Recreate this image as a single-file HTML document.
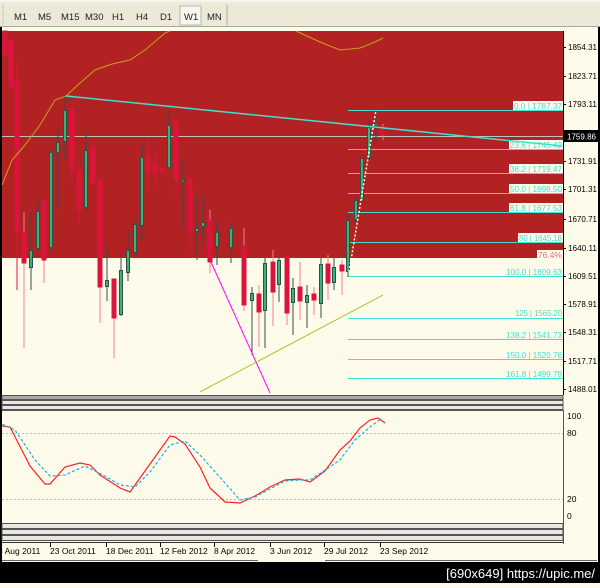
<!DOCTYPE html>
<html><head><style>
body{margin:0;width:600px;height:583px;overflow:hidden;background:#fffbeb;font-family:"Liberation Sans",Tahoma,sans-serif}
</style></head><body>
<svg width="600" height="583" xmlns="http://www.w3.org/2000/svg" font-family="Liberation Sans, sans-serif">
<rect width="600" height="583" fill="#fffbeb"/>
<rect x="0" y="0" width="600" height="27" fill="#ece9d8"/>
<line x1="0" y1="1" x2="600" y2="1" fill="none" stroke="#fff" />
<line x1="0" y1="26.5" x2="600" y2="26.5" stroke="#aca899"/>
<line x1="3" y1="5" x2="3" y2="24" stroke="#aca899" stroke-dasharray="1,1"/>
<rect x="180" y="6" width="21" height="19" fill="#f7f6f0" stroke="#b9b6a6"/>
<line x1="227" y1="5" x2="227" y2="25" stroke="#aca899"/>
<g font-size="9.5" fill="#222">
<text x="14" y="20">M1</text><text x="38" y="20">M5</text><text x="61" y="20">M15</text><text x="85" y="20">M30</text>
<text x="112" y="20">H1</text><text x="136" y="20">H4</text><text x="160" y="20">D1</text><text x="184" y="20">W1</text><text x="207" y="20">MN</text>
</g>
<rect x="0" y="27" width="2" height="535" fill="#000"/>
<rect x="598" y="27" width="2" height="535" fill="#000"/>
<rect x="2" y="31" width="561" height="227" fill="#b22222"/>
<line x1="563.5" y1="31" x2="563.5" y2="395" stroke="#000"/>
<line x1="2" y1="136.5" x2="563" y2="136.5" stroke="#c0c0c0"/>
<g stroke="#40e0d0" stroke-width="1">
<line x1="348" y1="110.5" x2="563" y2="110.5"/><line x1="348" y1="149.5" x2="563" y2="149.5"/>
<line x1="348" y1="173.5" x2="563" y2="173.5"/><line x1="348" y1="193.5" x2="563" y2="193.5"/>
<line x1="348" y1="212.5" x2="563" y2="212.5"/><line x1="348" y1="242.5" x2="563" y2="242.5"/>
<line x1="348" y1="276.5" x2="563" y2="276.5"/><line x1="348" y1="318.5" x2="563" y2="318.5"/>
<line x1="348" y1="339.5" x2="563" y2="339.5"/><line x1="348" y1="359.5" x2="563" y2="359.5"/>
<line x1="348" y1="378.5" x2="563" y2="378.5"/>
</g>
<g font-size="8.5" fill="#40e0d0" text-anchor="end">
<rect x="513" y="101" width="50" height="9" fill="#fffbeb"/><text x="562" y="109" textLength="48" lengthAdjust="spacingAndGlyphs">0.0 | 1787.37</text>
<rect x="509" y="140" width="54" height="9" fill="#fffbeb"/><text x="562" y="148" textLength="52" lengthAdjust="spacingAndGlyphs">23.6 | 1745.42</text>
<rect x="509" y="164" width="54" height="9" fill="#fffbeb"/><text x="562" y="172" textLength="52" lengthAdjust="spacingAndGlyphs">38.2 | 1719.47</text>
<rect x="509" y="184" width="54" height="9" fill="#fffbeb"/><text x="562" y="192" textLength="52" lengthAdjust="spacingAndGlyphs">50.0 | 1698.50</text>
<rect x="509" y="203" width="54" height="9" fill="#fffbeb"/><text x="562" y="211" textLength="52" lengthAdjust="spacingAndGlyphs">61.8 | 1677.53</text>
<rect x="518" y="233" width="45" height="9" fill="#fffbeb"/><text x="562" y="241" textLength="43" lengthAdjust="spacingAndGlyphs">80 | 1645.18</text>
<rect x="537" y="250" width="26" height="9" fill="#fffbeb"/><text x="562" y="258" fill="#e07080">76.4%</text>
<text x="562" y="275" textLength="56" lengthAdjust="spacingAndGlyphs">100.0 | 1609.63</text>
<text x="562" y="316" textLength="47" lengthAdjust="spacingAndGlyphs">125 | 1565.20</text>
<text x="562" y="338" textLength="56" lengthAdjust="spacingAndGlyphs">138.2 | 1541.73</text>
<text x="562" y="358" textLength="56" lengthAdjust="spacingAndGlyphs">150.0 | 1520.76</text>
<text x="562" y="377" textLength="56" lengthAdjust="spacingAndGlyphs">161.8 | 1499.79</text>
</g>
<g stroke-width="1">
<g fill="#dc143c" stroke="#dc143c">
<rect x="3" y="31" width="4" height="24"/>
<rect x="9" y="40" width="4" height="48"/>
<line x1="17" y1="60" x2="17" y2="290" /><rect x="15" y="82" width="4" height="151"/>
<line x1="24" y1="212" x2="24" y2="348" stroke="#f08090"/><rect x="22" y="232" width="4" height="31"/>
<line x1="44" y1="200" x2="44" y2="283" stroke="#f08090"/><rect x="42" y="200" width="4" height="60"/>
<line x1="72" y1="105" x2="72" y2="183"/><rect x="70" y="110" width="4" height="60"/>
<line x1="79" y1="165" x2="79" y2="223"/><rect x="77" y="170" width="4" height="40"/>
<line x1="93" y1="140" x2="93" y2="183"/><rect x="91" y="148" width="4" height="35"/>
<line x1="100" y1="180" x2="100" y2="323" stroke="#f08090"/><rect x="98" y="180" width="4" height="107"/>
<line x1="114" y1="279" x2="114" y2="358" stroke="#f08090"/><rect x="112" y="279" width="4" height="39"/>
<line x1="148" y1="138" x2="148" y2="190"/><rect x="146" y="158" width="4" height="12"/>
<line x1="155" y1="150" x2="155" y2="190"/><rect x="153" y="165" width="4" height="8"/>
<rect x="160" y="168" width="4" height="4"/>
<line x1="176" y1="122" x2="176" y2="200"/><rect x="174" y="122" width="4" height="58"/>
<line x1="190" y1="178" x2="190" y2="250"/><rect x="188" y="178" width="4" height="52"/>
<line x1="210" y1="210" x2="210" y2="273" stroke="#f08090"/><rect x="208" y="220" width="4" height="42"/>
<line x1="244" y1="228" x2="244" y2="311" stroke="#f08090"/><rect x="242" y="246" width="4" height="59"/>
<line x1="259" y1="285" x2="259" y2="347" stroke="#f08090"/><rect x="257" y="294" width="4" height="18"/>
<line x1="273" y1="250" x2="273" y2="326" stroke="#f08090"/><rect x="271" y="262" width="4" height="30"/>
<line x1="287" y1="257" x2="287" y2="325" stroke="#f08090"/><rect x="285" y="257" width="4" height="56"/>
<line x1="300" y1="262" x2="300" y2="320" stroke="#f08090"/><rect x="298" y="287" width="4" height="14"/>
<line x1="314" y1="287" x2="314" y2="315" stroke="#f08090"/><rect x="312" y="294" width="4" height="6"/>
<line x1="328" y1="255" x2="328" y2="300" stroke="#f08090"/><rect x="326" y="264" width="4" height="19"/>
<line x1="342" y1="260" x2="342" y2="295" stroke="#f08090"/><rect x="340" y="265" width="4" height="6"/>
<line x1="383" y1="124" x2="383" y2="140" stroke="#f08090"/><rect x="381" y="127" width="3" height="8"/>
</g>
<g fill="#3cb371" stroke="#2f4f4f">
<line x1="31" y1="212" x2="31" y2="290"/><rect x="29.5" y="250.5" width="3" height="17"/>
<line x1="38" y1="200" x2="38" y2="250"/><rect x="36.5" y="211.5" width="3" height="37"/>
<line x1="51" y1="150" x2="51" y2="253"/><rect x="49.5" y="152.5" width="3" height="95"/>
<line x1="58" y1="128" x2="58" y2="210"/><rect x="56.5" y="142.5" width="3" height="10"/>
<line x1="65" y1="96" x2="65" y2="160"/><rect x="63.5" y="110.5" width="3" height="31"/>
<line x1="86" y1="132" x2="86" y2="210"/><rect x="84.5" y="150.5" width="3" height="57"/>
<line x1="107" y1="247" x2="107" y2="301"/><rect x="105.5" y="280.5" width="3" height="6"/>
<line x1="121" y1="258" x2="121" y2="316"/><rect x="119.5" y="270.5" width="3" height="44"/>
<line x1="128" y1="230" x2="128" y2="281"/><rect x="126.5" y="250.5" width="3" height="22"/>
<line x1="135" y1="220" x2="135" y2="255"/><rect x="133.5" y="224.5" width="3" height="28"/>
<line x1="142" y1="145" x2="142" y2="240"/><rect x="140.5" y="157.5" width="3" height="68"/>
<line x1="169" y1="110" x2="169" y2="170"/><rect x="167.5" y="125.5" width="3" height="42"/>
<line x1="183" y1="160" x2="183" y2="228"/><rect x="181.5" y="180" width="3" height="2"/>
<line x1="197" y1="195" x2="197" y2="260"/><rect x="195.5" y="228.5" width="3" height="3"/>
<line x1="203" y1="195" x2="203" y2="245"/><rect x="201.5" y="222.5" width="3" height="4"/>
<line x1="217" y1="220" x2="217" y2="265"/><rect x="215.5" y="232.5" width="3" height="14"/>
<line x1="231" y1="222" x2="231" y2="263"/><rect x="229.5" y="228.5" width="3" height="19"/>
<line x1="252" y1="287" x2="252" y2="355"/><rect x="250.5" y="293.5" width="3" height="7"/>
<line x1="265" y1="258" x2="265" y2="348"/><rect x="263.5" y="263.5" width="3" height="47"/>
<line x1="279" y1="258" x2="279" y2="302"/><rect x="277.5" y="260.5" width="3" height="24"/>
<line x1="293" y1="278" x2="293" y2="335"/><rect x="291.5" y="288.5" width="3" height="14"/>
<line x1="307" y1="285" x2="307" y2="328"/><rect x="305.5" y="295.5" width="3" height="7"/>
<line x1="321" y1="258" x2="321" y2="318"/><rect x="319.5" y="264.5" width="3" height="39"/>
<line x1="334" y1="258" x2="334" y2="290"/><rect x="332.5" y="267.5" width="3" height="15"/>
<line x1="348" y1="215" x2="348" y2="277"/><rect x="346.5" y="220.5" width="3" height="51"/>
<line x1="356" y1="195" x2="356" y2="222"/><rect x="354.5" y="200.5" width="3" height="19"/>
<line x1="362" y1="158" x2="362" y2="202"/><rect x="360.5" y="158.5" width="3" height="42"/>
<line x1="369" y1="120" x2="369" y2="160"/><rect x="367.5" y="127.5" width="3" height="30"/>
<line x1="376" y1="110" x2="376" y2="143"/><rect x="374.5" y="123.5" width="3" height="2"/>
</g>
</g>
<polyline points="2,185 12,160 25,145 40,125 55,100 66,96 80,83 95,70 112,64 130,60 145,50 165,33 170,31" fill="none" stroke="#c8a020" stroke-width="1"/>
<polyline points="296,31 320,42 340,50 360,48 375,42 383,38" fill="none" stroke="#c8a020" stroke-width="1"/>
<line x1="66" y1="96" x2="563" y2="146" stroke="#40e0d0" stroke-width="1.5"/>
<line x1="349" y1="272" x2="376" y2="110" stroke="#fff" stroke-width="1.5" stroke-dasharray="2,2"/>
<line x1="211" y1="262" x2="270" y2="393" stroke="#ff00ff"/>
<line x1="200" y1="392" x2="383" y2="295" stroke="#9acd32"/>
<g font-size="8.5" fill="#000">
<g stroke="#000"><line x1="564" y1="47.5" x2="566" y2="47.5"/><line x1="564" y1="76.5" x2="566" y2="76.5"/><line x1="564" y1="104.5" x2="566" y2="104.5"/><line x1="564" y1="161.5" x2="566" y2="161.5"/><line x1="564" y1="189.5" x2="566" y2="189.5"/><line x1="564" y1="219.5" x2="566" y2="219.5"/><line x1="564" y1="248.5" x2="566" y2="248.5"/><line x1="564" y1="276.5" x2="566" y2="276.5"/><line x1="564" y1="304.5" x2="566" y2="304.5"/><line x1="564" y1="332.5" x2="566" y2="332.5"/><line x1="564" y1="361.5" x2="566" y2="361.5"/><line x1="564" y1="389.5" x2="566" y2="389.5"/></g>
<text x="568" y="50" textLength="29" lengthAdjust="spacingAndGlyphs">1854.31</text><text x="568" y="79" textLength="29" lengthAdjust="spacingAndGlyphs">1823.71</text><text x="568" y="107" textLength="29" lengthAdjust="spacingAndGlyphs">1793.11</text>
<text x="568" y="164" textLength="29" lengthAdjust="spacingAndGlyphs">1731.91</text><text x="568" y="192" textLength="29" lengthAdjust="spacingAndGlyphs">1701.31</text><text x="568" y="222" textLength="29" lengthAdjust="spacingAndGlyphs">1670.71</text>
<text x="568" y="251" textLength="29" lengthAdjust="spacingAndGlyphs">1640.11</text><text x="568" y="279" textLength="29" lengthAdjust="spacingAndGlyphs">1609.51</text><text x="568" y="307" textLength="29" lengthAdjust="spacingAndGlyphs">1578.91</text>
<text x="568" y="335" textLength="29" lengthAdjust="spacingAndGlyphs">1548.31</text><text x="568" y="364" textLength="29" lengthAdjust="spacingAndGlyphs">1517.71</text><text x="568" y="392" textLength="29" lengthAdjust="spacingAndGlyphs">1488.01</text>
</g>
<rect x="564" y="130" width="34" height="12" fill="#000"/>
<text x="567" y="139.5" font-size="8.5" fill="#fff" textLength="29" lengthAdjust="spacingAndGlyphs">1759.86</text>
<g fill="none" stroke="#555">
<rect x="2" y="395.5" width="561" height="4" fill="#aaa"/>
<rect x="2" y="400.5" width="561" height="4" fill="#e8e8e0"/>
<rect x="2" y="405.5" width="561" height="4" fill="#e8e8e0"/>
<line x1="2" y1="410.5" x2="563" y2="410.5"/>
<line x1="563.5" y1="410" x2="563.5" y2="544"/>
<rect x="2" y="523.5" width="561" height="5" fill="#e8e8e0"/>
<rect x="2" y="529.5" width="561" height="5" fill="#e8e8e0"/>
<rect x="2" y="535.5" width="561" height="5" fill="#e8e8e0"/>
<line x1="2" y1="542.5" x2="563" y2="542.5" stroke="#333"/>
</g>
<line x1="2" y1="433.5" x2="563" y2="433.5" stroke="#bbb" stroke-dasharray="2,2"/>
<line x1="2" y1="499.5" x2="563" y2="499.5" stroke="#bbb" stroke-dasharray="2,2"/>
<g font-size="8.5" fill="#000"><text x="567" y="419">100</text><text x="567" y="436">80</text><text x="567" y="502">20</text><text x="567" y="519">0</text></g>
<polyline points="2,426 10,427 30,466 45,484 50,484 65,467 80,463 90,465 100,475 120,488 130,492 150,464 170,436 175,437 185,444 200,467 210,488 225,502 240,503 255,496 270,487 285,480 300,479 310,482 325,471 340,450 350,441 360,428 370,420 378,418 385,423" fill="none" stroke="#ff2020" stroke-width="1.2"/>
<polyline points="2,424 15,430 35,460 50,476 65,475 85,466 105,476 120,485 135,487 150,472 170,445 185,441 200,455 225,483 240,500 255,497 270,489 285,481 300,480 310,480 325,470 340,460 355,440 370,427 382,418" fill="none" stroke="#1ab0e0" stroke-width="1.2" stroke-dasharray="3,2"/>
<g stroke="#000"><line x1="50.5" y1="543" x2="50.5" y2="547"/><line x1="106.5" y1="543" x2="106.5" y2="547"/><line x1="160.5" y1="543" x2="160.5" y2="547"/><line x1="214.5" y1="543" x2="214.5" y2="547"/><line x1="270.5" y1="543" x2="270.5" y2="547"/><line x1="324.5" y1="543" x2="324.5" y2="547"/><line x1="380.5" y1="543" x2="380.5" y2="547"/></g>
<g font-size="8.5" fill="#000">
<text x="-2" y="554">8 Aug 2011</text><text x="50" y="554">23 Oct 2011</text><text x="106" y="554">18 Dec 2011</text>
<text x="160" y="554">12 Feb 2012</text><text x="214" y="554">8 Apr 2012</text><text x="270" y="554">3 Jun 2012</text>
<text x="324" y="554">29 Jul 2012</text><text x="380" y="554">23 Sep 2012</text>
</g>
<line x1="2" y1="560.5" x2="258" y2="560.5" stroke="#666"/>
<line x1="325" y1="560.5" x2="597" y2="560.5" stroke="#666"/>
<rect x="0" y="562" width="600" height="21" fill="#000"/>
<text x="595" y="578" font-size="13" fill="#fff" text-anchor="end">[690x649] https://upic.me/</text>
</svg>
</body></html>
